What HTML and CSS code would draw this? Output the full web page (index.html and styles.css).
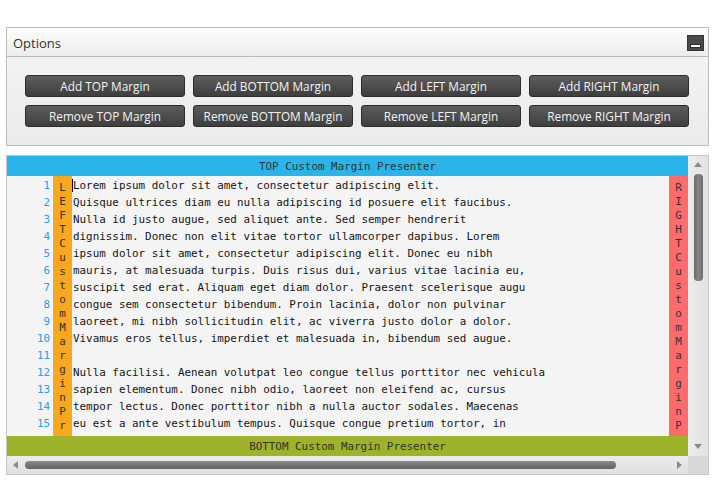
FILE: index.html
```html
<!DOCTYPE html>
<html>
<head>
<meta charset="utf-8">
<link rel="stylesheet" href="styles.css">
</head>
<body>
<div class="page">
  <section class="options">
    <header class="opt-head">
      <span class="opt-title">Options</span>
      <button class="min-btn" aria-label="Minimize"><span class="min-bar"></span></button>
    </header>
    <div class="opt-body">
      <div class="btn-grid">
        <button class="act">Add TOP Margin</button>
        <button class="act">Add BOTTOM Margin</button>
        <button class="act">Add LEFT Margin</button>
        <button class="act">Add RIGHT Margin</button>
        <button class="act">Remove TOP Margin</button>
        <button class="act">Remove BOTTOM Margin</button>
        <button class="act">Remove LEFT Margin</button>
        <button class="act">Remove RIGHT Margin</button>
      </div>
    </div>
  </section>

  <section class="editor">
    <div class="ed-main">
      <div class="bar top-bar">TOP Custom Margin Presenter</div>
      <div class="ed-mid">
        <div class="gutter">
          <div>1</div><div>2</div><div>3</div><div>4</div><div>5</div>
          <div>6</div><div>7</div><div>8</div><div>9</div><div>10</div>
          <div>11</div><div>12</div><div>13</div><div>14</div><div>15</div>
        </div>
        <div class="vmargin lmargin"><div class="vtext">LEFT Custom Margin Presenter</div></div>
        <div class="text">
          <span class="caret"></span>
          <div class="ln">Lorem ipsum dolor sit amet, consectetur adipiscing elit.</div>
          <div class="ln">Quisque ultrices diam eu nulla adipiscing id posuere elit faucibus.</div>
          <div class="ln">Nulla id justo augue, sed aliquet ante. Sed semper hendrerit</div>
          <div class="ln">dignissim. Donec non elit vitae tortor ullamcorper dapibus. Lorem</div>
          <div class="ln">ipsum dolor sit amet, consectetur adipiscing elit. Donec eu nibh</div>
          <div class="ln">mauris, at malesuada turpis. Duis risus dui, varius vitae lacinia eu,</div>
          <div class="ln">suscipit sed erat. Aliquam eget diam dolor. Praesent scelerisque augu</div>
          <div class="ln">congue sem consectetur bibendum. Proin lacinia, dolor non pulvinar</div>
          <div class="ln">laoreet, mi nibh sollicitudin elit, ac viverra justo dolor a dolor.</div>
          <div class="ln">Vivamus eros tellus, imperdiet et malesuada in, bibendum sed augue.</div>
          <div class="ln">&nbsp;</div>
          <div class="ln">Nulla facilisi. Aenean volutpat leo congue tellus porttitor nec vehicula</div>
          <div class="ln">sapien elementum. Donec nibh odio, laoreet non eleifend ac, cursus</div>
          <div class="ln">tempor lectus. Donec porttitor nibh a nulla auctor sodales. Maecenas</div>
          <div class="ln">eu est a ante vestibulum tempus. Quisque congue pretium tortor, in</div>
        </div>
        <div class="vmargin rmargin"><div class="vtext">RIGHT Custom Margin Presenter</div></div>
      </div>
      <div class="bar bottom-bar">BOTTOM Custom Margin Presenter</div>
    </div>
    <div class="vscroll">
      <svg class="arr-up" width="8" height="5" viewBox="0 0 8 5"><polygon points="4,0 8,5 0,5" fill="#8a8a8a"/></svg>
      <div class="vthumb"></div>
      <div class="fill"></div>
      <svg class="arr-down" width="8" height="5" viewBox="0 0 8 5"><polygon points="0,0 8,0 4,5" fill="#8a8a8a"/></svg>
    </div>
    <div class="hscroll">
      <svg class="arr-left" width="5" height="8" viewBox="0 0 5 8"><polygon points="5,0 5,8 0,4" fill="#8a8a8a"/></svg>
      <div class="hthumb"></div>
      <div class="fill"></div>
      <svg class="arr-right" width="5" height="8" viewBox="0 0 5 8"><polygon points="0,0 5,4 0,8" fill="#8a8a8a"/></svg>
    </div>
    <div class="corner"></div>
  </section>
</div>
</body>
</html>
```

FILE: styles.css
```css
html, body {
  margin: 0;
  padding: 0;
  background: #ffffff;
}

.page {
  padding: 27px 0 0 6px;
  width: 703px;
}

/* ---------- Options panel ---------- */
.options {
  border: 1px solid #bcbcbc;
  background: #f0f0f0;
}

.opt-head {
  height: 28px;
  display: flex;
  align-items: center;
  justify-content: space-between;
  padding: 0 4px 0 6px;
  background: linear-gradient(#fefefe, #ececec);
  border-bottom: 1px solid #bcbcbc;
}

.opt-title {
  font-family: "Open Sans", "Noto Sans", sans-serif;
  font-size: 13px;
  color: #333333;
  padding-top: 2px;
}

.min-btn {
  width: 17px;
  height: 16px;
  padding: 0;
  margin: 1px 0 0 0;
  border: 1px solid #333333;
  background: #4a4a4a;
  display: flex;
  align-items: flex-end;
  justify-content: center;
}

.min-bar {
  display: block;
  width: 9px;
  height: 2px;
  background: #ffffff;
  border: 1px solid #2e2e2e;
  margin-bottom: 2px;
}

.opt-body {
  padding: 18px;
  background: linear-gradient(#f3f3f3, #eaeaea);
}

.btn-grid {
  display: grid;
  grid-template-columns: repeat(4, 160px);
  grid-auto-rows: 22px;
  gap: 8px;
}

.act {
  margin: 0;
  padding: 0;
  border: 1px solid #2c2c2c;
  border-radius: 3px;
  background: linear-gradient(#5c5c5c, #3e3e3e);
  color: #f4f4f4;
  font-family: "Open Sans", "Noto Sans", sans-serif;
  font-size: 11.8px;
  line-height: 20px;
  text-align: center;
  white-space: nowrap;
}

/* ---------- Editor ---------- */
.editor {
  margin-top: 9px;
  border: 1px solid #c6c6c6;
  display: grid;
  grid-template-columns: 681px 20px;
  grid-template-rows: 300px 18px;
  background: #f4f4f4;
}

.ed-main {
  display: grid;
  grid-template-rows: 20px 1fr 20px;
  overflow: hidden;
  font-family: "DejaVu Sans Mono", "Liberation Mono", monospace;
  font-size: 10.9px;
}

.bar {
  display: flex;
  align-items: center;
  justify-content: center;
  color: #333333;
  line-height: 20px;
  padding-top: 1px;
}

.top-bar { background: #2ab4ea; }
.bottom-bar { background: #9eb22a; }

.ed-mid {
  display: grid;
  grid-template-columns: 46px 19px 597px 19px;
  overflow: hidden;
  background: #f4f4f4;
}

.gutter {
  padding: 1px 3px 0 0;
  text-align: right;
  line-height: 17px;
  color: #2b9de4;
}

.vmargin {
  overflow: hidden;
  padding-top: 5px;
  color: #333333;
  line-height: 14px;
}

.lmargin { background: #f8a71f; }
.rmargin { background: #fd6b6b; }

.vtext {
  width: 1ch;
  margin: 0 auto;
  word-break: break-all;
  text-align: center;
}

.text {
  position: relative;
  padding: 1px 0 0 1px;
  line-height: 17px;
  color: #141414;
  overflow: hidden;
}

.ln {
  white-space: pre;
}

.caret {
  position: absolute;
  left: 0;
  top: 3px;
  width: 1px;
  height: 13px;
  background: #000000;
}

/* ---------- Scrollbars ---------- */
.vscroll {
  display: flex;
  flex-direction: column;
  align-items: center;
  background: linear-gradient(90deg, #ececec, #e2e2e2);
}

.arr-up { margin-top: 6px; display: block; }
.vthumb {
  margin-top: 7px;
  width: 9px;
  height: 107px;
  border-radius: 4px;
  background: linear-gradient(90deg, #6a6a6a, #858585 50%, #6a6a6a);
}
.fill { flex: 1; }
.arr-down { margin-bottom: 7px; display: block; }

.hscroll {
  display: flex;
  align-items: center;
  background: linear-gradient(#ececec, #e0e0e0);
}

.arr-left { margin-left: 6px; display: block; }
.hthumb {
  margin-left: 7px;
  width: 591px;
  height: 8px;
  border-radius: 4px;
  background: linear-gradient(#8a8a8a, #626262);
}
.arr-right { margin-right: 6px; display: block; }

.corner {
  background: #d8d8d8;
}
```
